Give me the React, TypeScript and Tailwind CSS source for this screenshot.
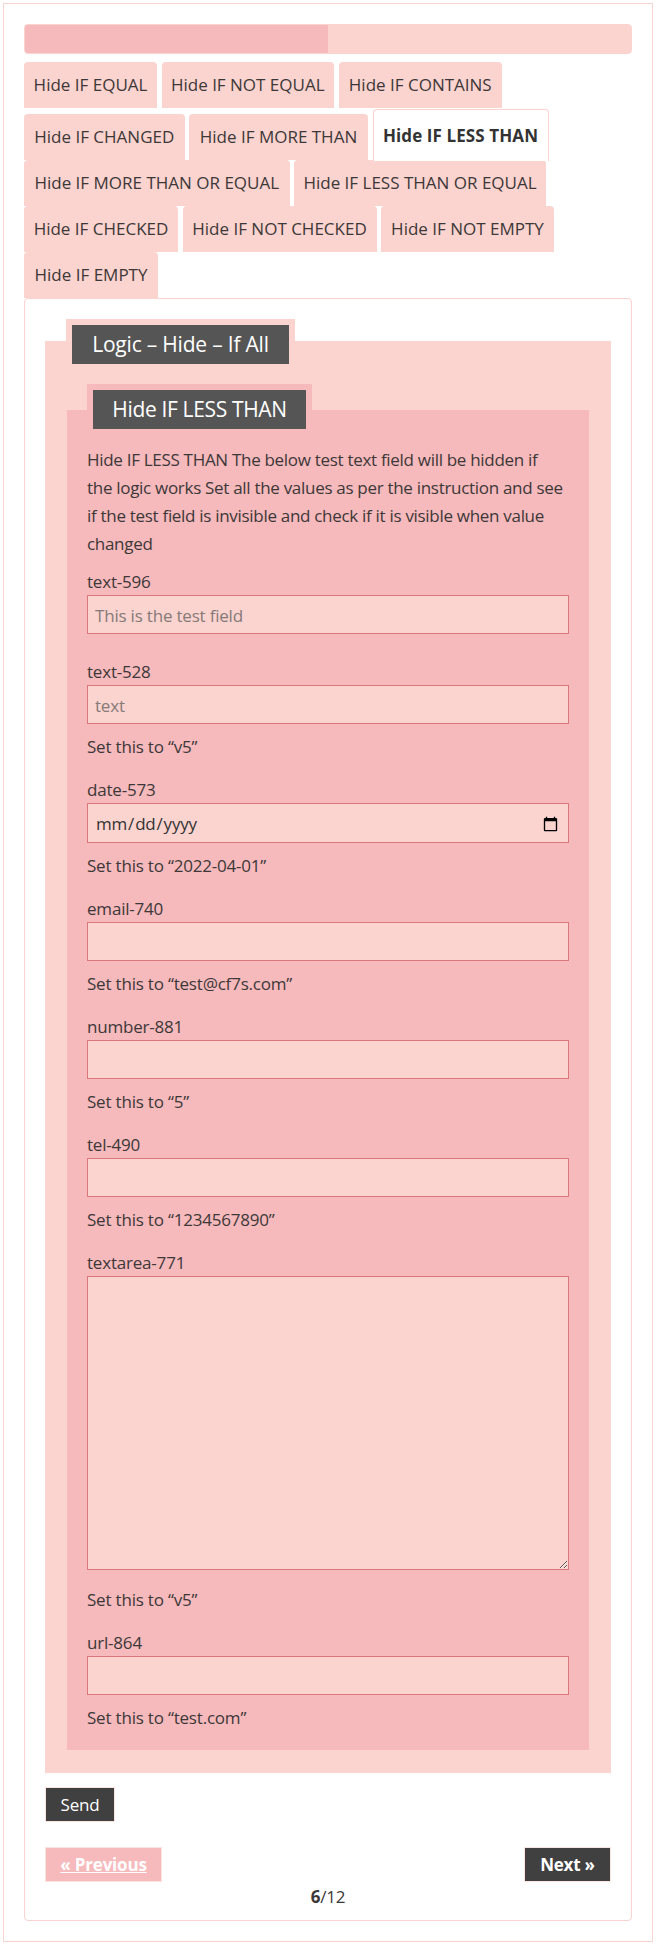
const tabs = [
  { name: 'Hide IF EQUAL', width: 'w-[133px]' },
  { name: 'Hide IF NOT EQUAL', width: 'w-[172.5px]' },
  { name: 'Hide IF CONTAINS', width: 'w-[163.5px]' },
  { name: 'Hide IF CHANGED', width: 'w-[160.5px]' },
  { name: 'Hide IF MORE THAN', width: 'w-[179px]' },
  { name: 'Hide IF LESS THAN', width: 'w-[176px]' },
  { name: 'Hide IF MORE THAN OR EQUAL', width: 'w-[265.5px]' },
  { name: 'Hide IF LESS THAN OR EQUAL', width: 'w-[252px]' },
  { name: 'Hide IF CHECKED', width: 'w-[154px]' },
  { name: 'Hide IF NOT CHECKED', width: 'w-[194px]' },
  { name: 'Hide IF NOT EMPTY', width: 'w-[173px]' },
  { name: 'Hide IF EMPTY', width: 'w-[134px]' },
];

const fieldClass =
  'block w-full h-[39px] border border-[#d9777b] bg-[#fbd3cf] px-[7px] pt-[2px] text-[17px] text-[#333] placeholder:text-[#857a78] outline-none';

const Field = ({ label, hint, type = 'text', placeholder }: { label: string; hint: string; type?: string; placeholder?: string }) => (
  <div className="mb-[17px]">
    <label className="block h-[25px] leading-[24px]">{label}</label>
    <input type={type} placeholder={placeholder} className={fieldClass} />
    <p className="mt-[9px] leading-[28px]">{hint}</p>
  </div>
);

export default function App() {
  return (
    <div className="mt-[3px] mr-[5px] ml-[3px] border border-[#fbd3cf] bg-white p-5 text-[17px] tracking-[-0.2px] text-[#3d3838] [font-family:'Open_Sans',sans-serif]">
      <div className="h-[30px] rounded-[4px] border border-[#fbd3cf] bg-[#fbd3cf]">
        <div className="h-full w-1/2 rounded-l-[3px] bg-[#f6b9bc]" />
      </div>

      <div className="mt-2 flex flex-wrap items-end gap-x-[4.5px] tracking-normal">
        {tabs.map((tab) =>
          tab.name === 'Hide IF LESS THAN' ? (
            <div
              key={tab.name}
              className={`relative mt-px -mb-px flex h-[52px] items-center justify-center rounded-t-[4px] border border-b-0 border-[#fbd3cf] bg-white font-bold tracking-[0.1px] text-[#333] ${tab.width}`}
            >
              {tab.name}
            </div>
          ) : (
            <div key={tab.name} className={`flex h-[46px] items-center justify-center rounded-t-[4px] bg-[#fbd3cf] ${tab.width}`}>
              {tab.name}
            </div>
          ),
        )}
      </div>

      <div className="rounded-[4px] border border-[#fbd3cf] px-5 pt-[42px] pb-[9px]">
        <div className="flow-root bg-[#fbd3cf] px-[22px] pb-[23px]">
          <div className="-mt-[22px] mb-[40px] ml-[-1px] w-fit border-[6px] border-[#fbd3cf]">
            <div className="flex h-[39px] w-[217px] items-center justify-center bg-[#555555] text-[21px] tracking-[-0.2px] text-white">Logic – Hide – If All</div>
          </div>

          <div className="flow-root bg-[#f6b9bc] px-5 pb-[1px]">
            <div className="-mt-[26px] w-fit border-[6px] border-[#f6b9bc]">
              <div className="flex h-[39px] w-[213px] items-center justify-center bg-[#555555] text-[21px] tracking-[-0.35px] text-white">Hide IF LESS THAN</div>
            </div>
            <p className="mt-[11px] mb-[12px] leading-[28px] tracking-[-0.3px] whitespace-nowrap">
              Hide IF LESS THAN The below test text field will be hidden if
              <br />
              the logic works Set all the values as per the instruction and see
              <br />
              if the test field is invisible and check if it is visible when value
              <br />
              changed
            </p>

            <div className="mb-[26px]">
              <label className="block h-[25px] leading-[24px]">text-596</label>
              <input type="text" placeholder="This is the test field" className={fieldClass} />
            </div>

            <Field label="text-528" hint="Set this to “v5”" placeholder="text" />
            <div className="mb-[17px]">
              <label className="block h-[25px] leading-[24px]">date-573</label>
              <input type="date" className={`${fieldClass} h-[40px]`} />
              <p className="mt-[9px] leading-[28px]">Set this to “2022-04-01”</p>
            </div>
            <Field label="email-740" hint="Set this to “test@cf7s.com”" type="email" />
            <Field label="number-881" hint="Set this to “5”" type="number" />
            <Field label="tel-490" hint="Set this to “1234567890”" type="tel" />
            <div className="mb-[17px]">
              <label className="block h-[25px] leading-[24px]">textarea-771</label>
              <textarea className="block h-[294px] w-full border border-[#d9777b] bg-[#fbd3cf] px-[7px] text-[17px] outline-none" />
              <p className="mt-[16px] leading-[28px]">Set this to “v5”</p>
            </div>
            <Field label="url-864" hint="Set this to “test.com”" type="url" />
          </div>
        </div>

        <button className="mt-[14px] block h-[35px] w-[70px] border border-[#fbe3e0] bg-[#404040] text-white">Send</button>

        <div className="mt-[25px] flex items-center justify-between">
          <a className="flex h-[35px] w-[117px] items-center justify-center border border-[#fbe3e0] bg-[#f6b9bc] font-bold text-white underline">« Previous</a>
          <a className="flex h-[35px] w-[87px] items-center justify-center border border-[#fbe3e0] bg-[#404040] font-bold text-white">Next »</a>
        </div>
        <p className="mt-[1px] text-center leading-[28px]">
          <b>6</b>/12
        </p>
      </div>
    </div>
  );
}
